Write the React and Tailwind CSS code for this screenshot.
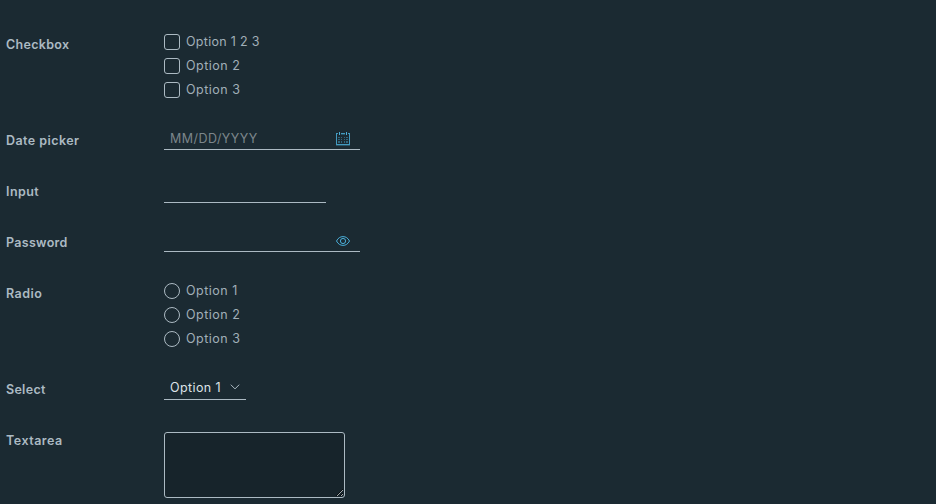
function Row({ label, height, tracking = "tracking-[0.3px]", children }) {
  return (
    <div className={`flex items-start ${height}`}>
      <div className={`w-[158px] shrink-0 pt-[3px] text-[12.5px] leading-6 font-semibold ${tracking}`}>{label}</div>
      {children}
    </div>
  );
}

function Choice({ round, children, tracking = "tracking-[0.5px]" }) {
  return (
    <label className="flex h-6 items-center gap-1.5">
      <span className={`size-4 border border-[#acbac3] ${round ? "rounded-full" : "rounded-[3px]"}`} />
      <span className={`text-[12.5px] leading-6 text-[#a1afb8] ${tracking}`}>{children}</span>
    </label>
  );
}

function CalendarIcon() {
  return (
    <svg className="mt-0.5" width="14" height="14" viewBox="0 0 14 14" fill="none" stroke="#4aaed9" shapeRendering="crispEdges">
      <path d="M2 1.5H.5v11h13v-11H12M5 1.5h4" opacity=".85" />
      <path d="M3.5 0v3M10.5 0v3" />
      <path d="M5 2.5h4M0 13.5h14" opacity=".3" />
      <path d="M2 5.5h2M5 5.5h1M8 5.5h1M10 5.5h2M2 7.5h2M5 7.5h1M8 7.5h1M10 7.5h2M2 9.5h2M5 9.5h1M8 9.5h1M10 9.5h2M2 10.5h2M5 10.5h1M8 10.5h1M10 10.5h2" opacity=".45" />
    </svg>
  );
}

function EyeIcon() {
  return (
    <svg width="14" height="10" viewBox="0 0 14 10" fill="none" stroke="#4aaed9">
      <path d="M.5 5C2 2 4.3.6 7 .6S12 2 13.500 5C12 8 9.700 9.400 7 9.400S2 8 .5 5Z" />
      <circle cx="7" cy="5" r="2.600" />
    </svg>
  );
}

export default function App() {
  return (
    <form className="h-[504px] w-[936px] overflow-hidden bg-[#1b2a32] pt-[30px] pl-1.5 font-[Inter,sans-serif] text-[#acbac3]">
      <Row height="h-24" label="Checkbox">
        <div>
          <Choice tracking="tracking-[0.3px]">Option 1 2 3</Choice>
          <Choice>Option 2</Choice>
          <Choice>Option 3</Choice>
        </div>
      </Row>
      <Row height="h-[51px]" label="Date picker" tracking="tracking-[0.45px]">
        <div className="flex h-6 w-[196px] items-center border-b border-[#acbac3] pl-1.5">
          <input
            className="mt-1 w-[166px] bg-transparent text-[12.5px] tracking-[0.45px] outline-none placeholder:text-[#7c868b]"
            placeholder="MM/DD/YYYY"
          />
          <CalendarIcon />
        </div>
      </Row>
      <Row height="h-[51px]" label="Input" tracking="tracking-[0.45px]">
        <input className="h-[26px] w-[162px] border-b border-[#acbac3] bg-transparent px-1.5 text-[13px] outline-none" />
      </Row>
      <Row height="h-[51px]" label="Password">
        <div className="flex h-6 w-[196px] items-center border-b border-[#acbac3] pt-[3px] pl-1.5">
          <input type="password" className="h-5 w-[166px] bg-transparent text-[13px] outline-none" />
          <EyeIcon />
        </div>
      </Row>
      <Row height="h-24" label="Radio" tracking="tracking-[0.45px]">
        <div>
          <Choice round>Option 1</Choice>
          <Choice round>Option 2</Choice>
          <Choice round>Option 3</Choice>
        </div>
      </Row>
      <Row height="h-[51px]" label="Select">
        <div className="flex h-[25px] w-[82px] items-center justify-between border-b border-[#acbac3] pr-1.5 pl-1.5 text-[12.5px] text-[#dde2e6]">
          <span className="pt-0.5 tracking-[0.4px]">Option 1</span>
          <svg width="10" height="6" viewBox="0 0 10 6" fill="none" stroke="#acbac3">
            <path d="M.8.7 5 4.900 9.200.7" />
          </svg>
        </div>
      </Row>
      <Row height="h-[72px]" label="Textarea" tracking="tracking-[0.5px]">
        <textarea className="mt-1.5 h-[66px] w-[181px] rounded-[3px] border border-[#acbac3] bg-[#17242b] px-1.5 text-[13px] outline-none" />
      </Row>
    </form>
  );
}
